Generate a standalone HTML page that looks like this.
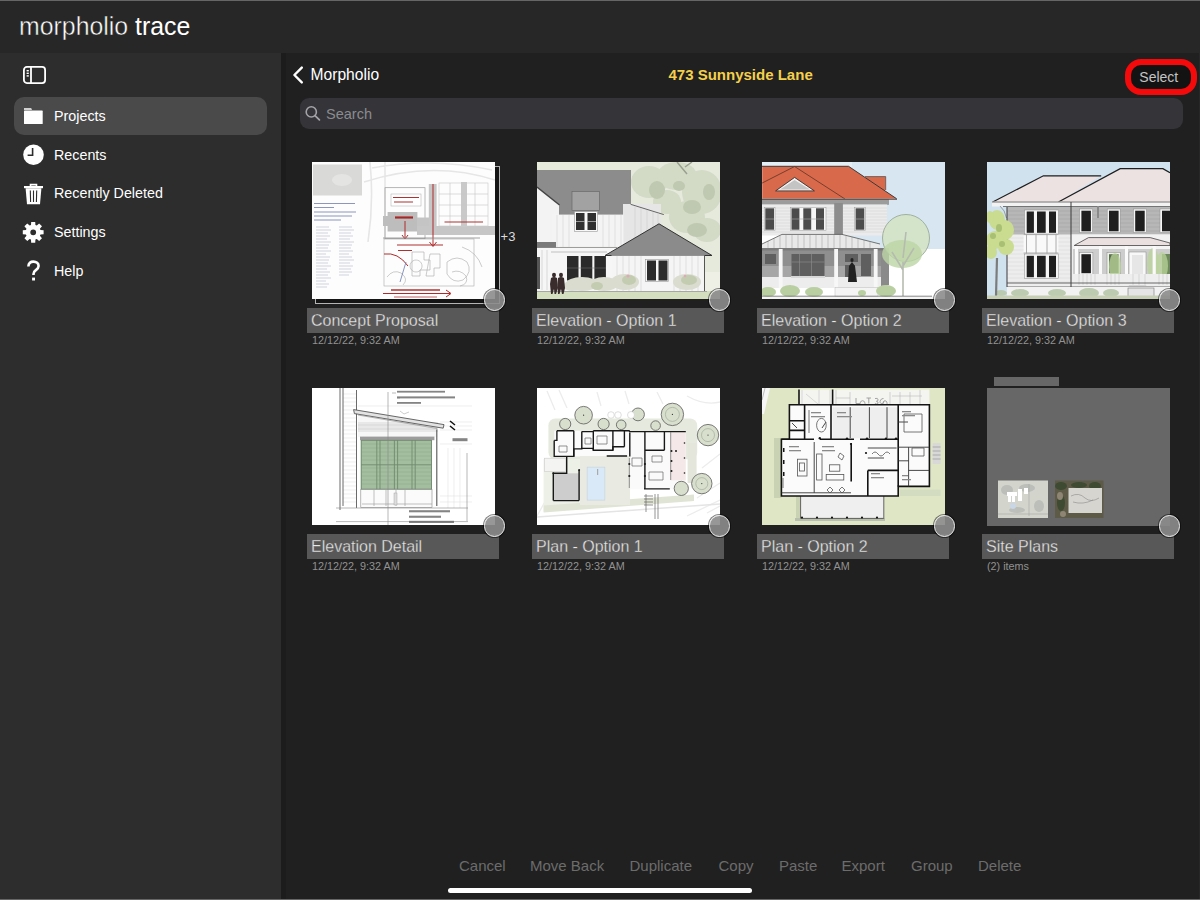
<!DOCTYPE html>
<html><head><meta charset="utf-8">
<style>
*{margin:0;padding:0;box-sizing:border-box}
html,body{width:1200px;height:900px;overflow:hidden;background:#202020;font-family:"Liberation Sans",sans-serif}
.a{position:absolute}
.t{position:absolute;white-space:nowrap;line-height:1}
#topline{left:0;top:0;width:1200px;height:1.2px;background:#666}
#header{left:0;top:1px;width:1200px;height:52px;background:#272727}
#sidebar{left:0;top:53px;width:281px;height:847px;background:#2d2d2d}
#sep{left:281px;top:53px;width:5px;height:847px;background:#1c1c1c}
#botline{left:0;top:899px;width:1200px;height:1px;background:#666}
#redge{left:1198.5px;top:53px;width:1.5px;height:846px;background:#272727}
.side{color:#fff;font-size:14.3px}
.lbl{position:absolute;height:25px;width:191.5px;background:#585858}
.lt{position:absolute;white-space:nowrap;line-height:1;font-size:16px;color:#e8e8e8;-webkit-text-stroke:0.3px #585858}
.dt{position:absolute;white-space:nowrap;line-height:1;font-size:10.8px;color:#929292}
.th{position:absolute;width:183px;height:137px;background:#fff;overflow:hidden}
.th svg{display:block}
.cir{position:absolute;width:21.6px;height:21.6px;border-radius:50%;border:1.7px solid #ececec;background:rgba(140,140,140,0.9);box-shadow:0 0 0 1px rgba(0,0,0,0.5)}
.tb{position:absolute;white-space:nowrap;line-height:1;font-size:15px;color:#6c6c6c;top:858px}
</style></head>
<body>
<div id="topline" class="a"></div>
<div id="header" class="a"></div>
<div class="t" style="left:19px;top:13.6px;font-size:25.5px;color:#fff;transform:scaleX(0.975);transform-origin:0 0"><span style="-webkit-text-stroke:0.45px #272727">morpholio</span> trace</div>
<div id="sidebar" class="a"></div>
<div id="sep" class="a"></div>

<!-- sidebar toggle icon -->
<svg class="a" style="left:22px;top:65px" width="26" height="21" viewBox="0 0 26 21">
 <rect x="1.9" y="1.9" width="21.2" height="16.2" rx="3" fill="none" stroke="#fff" stroke-width="1.8"/>
 <line x1="9" y1="2" x2="9" y2="18" stroke="#fff" stroke-width="1.8"/>
 <rect x="4.6" y="5" width="2.2" height="1.4" fill="#fff"/>
 <rect x="4.6" y="7.6" width="2.2" height="1.4" fill="#fff"/>
 <rect x="4.6" y="10.2" width="2.2" height="1.4" fill="#fff"/>
</svg>

<div class="a" style="left:14px;top:97px;width:253px;height:38px;border-radius:10px;background:#4a4a4a"></div>
<!-- folder -->
<svg class="a" style="left:23px;top:106px" width="22" height="20" viewBox="0 0 22 20">
 <path d="M1 2.2 h7.2 l0.8 1.6 H1z" fill="#fff"/>
 <rect x="1" y="4.6" width="18.7" height="13.4" rx="0.6" fill="#fff"/>
</svg>
<div class="t side" style="left:54px;top:109.2px">Projects</div>
<!-- clock -->
<svg class="a" style="left:22px;top:143px" width="24" height="24" viewBox="0 0 24 24">
 <circle cx="11.5" cy="11.7" r="10.3" fill="#fff"/>
 <path d="M10.6 5 V12.2 H5.6" fill="none" stroke="#2d2d2d" stroke-width="1.6"/>
</svg>
<div class="t side" style="left:54px;top:147.6px">Recents</div>
<!-- trash -->
<svg class="a" style="left:22px;top:182px" width="24" height="24" viewBox="0 0 24 24">
 <path d="M8.5 4.2 V2.6 h6 V4.2" fill="none" stroke="#fff" stroke-width="1.6"/>
 <rect x="2" y="4" width="19" height="2.2" fill="#fff"/>
 <path d="M3.6 6.2 L5 22.3 H18 L19.4 6.2z" fill="#fff"/>
 <line x1="8.3" y1="8.5" x2="8.6" y2="20" stroke="#2d2d2d" stroke-width="1.1"/>
 <line x1="11.5" y1="8.5" x2="11.5" y2="20" stroke="#2d2d2d" stroke-width="1.1"/>
 <line x1="14.7" y1="8.5" x2="14.4" y2="20" stroke="#2d2d2d" stroke-width="1.1"/>
</svg>
<div class="t side" style="left:54px;top:186.2px">Recently Deleted</div>
<!-- gear -->
<svg class="a" style="left:21px;top:220px" width="25" height="25" viewBox="0 0 25 25"><path d="M19.47 10.08 L22.61 10.28 L22.61 14.32 L19.47 14.52 L18.91 15.87 L20.99 18.23 L18.13 21.09 L15.77 19.01 L14.42 19.57 L14.22 22.71 L10.18 22.71 L9.98 19.57 L8.63 19.01 L6.27 21.09 L3.41 18.23 L5.49 15.87 L4.93 14.52 L1.79 14.32 L1.79 10.28 L4.93 10.08 L5.49 8.73 L3.41 6.37 L6.27 3.51 L8.63 5.59 L9.98 5.03 L10.18 1.89 L14.22 1.89 L14.42 5.03 L15.77 5.59 L18.13 3.51 L20.99 6.37 L18.91 8.73Z M9.30 12.30 a2.90 2.90 0 1 0 5.80 0 a2.90 2.90 0 1 0 -5.80 0Z" fill="#fff" fill-rule="evenodd"/></svg>
<div class="t side" style="left:54px;top:225.2px">Settings</div>
<!-- help -->
<svg class="a" style="left:24px;top:259px" width="20" height="24" viewBox="0 0 20 24">
 <path d="M4.4 7.4 C4.4 4 6.6 2.6 9.4 2.6 C12.4 2.6 14.6 4.4 14.6 7 C14.6 9.4 13 10.3 11.5 11.4 C10.2 12.3 9.5 13.2 9.5 15 V16" fill="none" stroke="#fff" stroke-width="2.6"/>
 <rect x="8.1" y="18.6" width="2.9" height="2.9" fill="#fff"/>
</svg>
<div class="t side" style="left:54px;top:263.9px">Help</div>

<!-- nav -->
<svg class="a" style="left:291px;top:65px" width="14" height="20" viewBox="0 0 14 20">
 <path d="M10.8 2.6 L3.4 10 L10.8 17.4" fill="none" stroke="#fff" stroke-width="2.4" stroke-linecap="round" stroke-linejoin="round"/>
</svg>
<div class="t" style="left:310.6px;top:66.7px;font-size:15.6px;color:#fff">Morpholio</div>
<div class="t" style="left:668.5px;top:67.3px;font-size:15px;font-weight:bold;color:#f4d04c">473 Sunnyside Lane</div>
<div class="a" style="left:1124.6px;top:58.6px;width:72.8px;height:36.4px;border:6.8px solid #f40a0a;border-radius:16px;background:#131313"></div>
<div class="t" style="left:1139.3px;top:70px;font-size:14px;color:#c4c4c4">Select</div>

<!-- search -->
<div class="a" style="left:299.5px;top:97.5px;width:883px;height:31px;border-radius:9px;background:#343439"></div>
<svg class="a" style="left:303px;top:103px" width="20" height="20" viewBox="0 0 20 20">
 <circle cx="8.3" cy="8.9" r="5.1" fill="none" stroke="#a3a3a8" stroke-width="1.6"/>
 <line x1="12" y1="12.6" x2="16.4" y2="16.9" stroke="#a3a3a8" stroke-width="1.8" stroke-linecap="round"/>
</svg>
<div class="t" style="left:326px;top:106.7px;font-size:14.5px;color:#8b8b8f">Search</div>

<!-- CARDS -->
<div id="cards">
<div class="a" style="left:315px;top:166px;width:184.5px;height:137.5px;border:1.3px solid #b4b4b4;background:#151515"></div>
<div class="t" style="left:500.6px;top:229.6px;font-size:13px;color:#dcdcdc">+3</div>
<div class="th" style="left:312px;top:162px"><svg width="183" height="137" viewBox="0 0 183 137">
<rect width="183" height="137" fill="#fdfdfd"/>
<rect x="1" y="2.5" width="49" height="31" fill="#d9dad8"/>
<ellipse cx="30" cy="18" rx="10" ry="6" fill="#e4e5e2"/>
<g stroke="#e6e6e6" stroke-width="1.6" fill="none">
<path d="M58 0 Q62 40 56 80 M73 0 V75 M52 20 Q120 -2 183 18 M60 6 Q120 -5 180 8"/>
</g>
<g stroke="#2e3f8a" stroke-width="0.9" opacity="0.6">
<path d="M2 41.5H43M2 45.5H22M2 50H44M2 54H40M2 58H29"/>
</g>
<g stroke="#c3c8d6" stroke-width="0.8">
<path d="M4 65H17M4 68H19M4 71H16M4 74H18M4 77H15M4 80H19M4 83H17M4 86H16M4 89H19M4 92H14M4 95H18M4 98H17M4 101H16M4 104H19M4 107H15M4 110H18M4 113H16M4 116H19M4 119H14M4 122H17M4 125H15"/>
<path d="M27 65H40M27 68H42M27 71H39M27 74H41M27 77H38M27 80H42M27 83H40M27 86H39M27 89H41M27 92H37M27 95H40M27 98H42M27 101H38M27 104H41M27 107H39M27 110H40M27 113H37"/>
</g>
<rect x="73" y="25.7" width="40" height="51" fill="none" stroke="#999" stroke-width="0.7"/>
<rect x="79" y="32" width="30" height="12" fill="#fff" stroke="#aaa" stroke-width="0.5"/>
<g stroke="#b03030" stroke-width="1.1"><path d="M81 35.5H107M82 40H101"/></g>
<path d="M75.6 50 H105.4 V69.5 H75.6z M71 54 H76 V64 H71z" fill="#bdbdbd"/>
<path d="M105 55.5 H121 V64 H105z" fill="#c4c4c4"/>
<rect x="105" y="64" width="78" height="9" fill="#c6c6c6"/>
<rect x="116.8" y="22" width="7.8" height="43" fill="#c6c6c6"/>
<rect x="149" y="20" width="6" height="45" fill="#c9c9c9"/>
<g stroke="#c8c8c8" stroke-width="0.6" fill="none">
<rect x="127" y="21" width="49" height="43"/>
<path d="M127 32H176M127 43H176M127 54H176M138 21V64M163 21V64"/>
</g>
<g stroke="#b03030" stroke-width="1.2"><path d="M132.5 60H171"/></g>
<path d="M121 22 V84" stroke="#b02a2a" stroke-width="1"/>
<path d="M117.5 80 L121 84.5 L124.5 80" stroke="#b02a2a" stroke-width="1" fill="none"/>
<g stroke="#a82828" stroke-width="2.2"><path d="M83 55.5H101"/></g>
<path d="M93 59 V76 M90 73 L93 77 L96 73" stroke="#b02a2a" stroke-width="1" fill="none"/>
<g stroke="#b03030" stroke-width="1.2"><path d="M85 83H131M86 88.5H100"/></g>
<rect x="72" y="77" width="90" height="47" fill="none" stroke="#aaa" stroke-width="0.6"/>
<path d="M71 76H168" stroke="#888" stroke-width="0.8"/>
<path d="M72 92 Q86 90 96 104" stroke="#b02a2a" stroke-width="1" fill="none"/>
<g stroke="#aaa" stroke-width="0.6" fill="none">
<path d="M100 90 h12 v8 h6 v10 h-10 v6 h-8z M118 92 h10 v14 h-6 v8 h-8z M104 98 a6 6 0 1 0 0.1 0 M135 100 q10 -8 20 0 q6 10 -4 18 q-10 4 -16 -6z M150 85 q15 5 20 20"/>
<path d="M75 115 q6 -8 14 -4 q8 6 2 12 M140 110 q8 -3 14 4 q3 8 -6 10"/>
</g>
<path d="M94 100 L88 120" stroke="#6a7ab0" stroke-width="0.8"/>
<g stroke="#b03030" stroke-width="1.3"><path d="M79 128H128"/></g>
<path d="M71 131.5H138 M134 128 L139 131.5 L134 135" stroke="#b02a2a" stroke-width="1" fill="none"/>
<g stroke="#c05050" stroke-width="0.9"><path d="M82 135H125"/></g>
</svg></div>
<div class="lbl" style="left:307px;top:308.3px"></div>
<div class="cir" style="left:483.7px;top:289.0px"></div>
<div class="lt" style="left:311px;top:312.8px">Concept Proposal</div>
<div class="dt" style="left:312px;top:335.4px">12/12/22, 9:32 AM</div>
<div class="th" style="left:537px;top:162px"><svg width="183" height="137" viewBox="0 0 183 137">
<rect width="183" height="137" fill="#eef0e6"/>
<rect x="90" y="0" width="93" height="110" fill="#e6eadd"/>
<g fill="#d3dac6">
<ellipse cx="112" cy="20" rx="18" ry="16"/><ellipse cx="140" cy="14" rx="20" ry="14"/><ellipse cx="165" cy="30" rx="20" ry="22"/>
<ellipse cx="150" cy="55" rx="18" ry="16"/><ellipse cx="170" cy="68" rx="14" ry="12"/><ellipse cx="130" cy="40" rx="14" ry="12"/>
</g>
<g fill="#bfc8b0">
<ellipse cx="120" cy="28" rx="8" ry="9"/><ellipse cx="155" cy="45" rx="9" ry="7"/><ellipse cx="160" cy="68" rx="10" ry="7"/>
<ellipse cx="172" cy="30" rx="6" ry="8"/><ellipse cx="142" cy="24" rx="6" ry="5"/>
</g>
<path d="M140 0 L150 12 M148 5 L155 0" stroke="#9aa08f" stroke-width="1.5"/>
<rect x="-1" y="0" width="94" height="8" fill="#e6eadb"/>
<rect x="15" y="8" width="79" height="45" fill="#8c8c8c"/>
<path d="M0 8 H15 V53 H0z" fill="#8c8c8c"/>
<path d="M0 25 L22 43 V90 H0z" fill="#f3f3f3"/>
<path d="M0 25 L22.5 43" stroke="#444" stroke-width="1.4"/>
<rect x="35" y="29.5" width="27.5" height="19" fill="#a2a2a2" stroke="#6a6a6a" stroke-width="0.7"/>
<path d="M86 42 L124 42 L124 85 L86 85z" fill="#e6e6e6"/>
<path d="M93.6 42.3 L126.8 52.6" stroke="#666" stroke-width="1"/>
<g stroke="#cfcfcf" stroke-width="0.6">
<path d="M98 44V85M104 46V85M110 48V85M116 50V85M121 51V85"/>
</g>
<rect x="14.4" y="52.6" width="72" height="32" fill="#f4f4f4"/>
<g stroke="#d4d4d4" stroke-width="0.6">
<path d="M20 53V85M26 53V85M32 53V85M66 53V85M72 53V85M78 53V85M84 53V85"/>
</g>
<rect x="37.5" y="49.5" width="23" height="20" fill="#f8f8f8" stroke="#999" stroke-width="0.6"/>
<rect x="39" y="51" width="8.5" height="17" fill="#2f2f2f"/><rect x="50.5" y="51" width="8.5" height="17" fill="#2f2f2f"/>
<path d="M39 59.5H47.5M50.5 59.5H59" stroke="#ddd" stroke-width="0.6"/>
<rect x="0" y="80" width="19" height="6.5" fill="#7a7a7a"/>
<rect x="0" y="86" width="86" height="44" fill="#f6f6f6"/>
<path d="M0 85.5H80" stroke="#888" stroke-width="0.8"/>
<path d="M14 90 H70" stroke="#aaa" stroke-width="0.7"/>
<rect x="30" y="94" width="11.5" height="24.5" fill="#2a2a2a"/><rect x="43.8" y="94" width="11.5" height="24.5" fill="#2a2a2a"/><rect x="57.4" y="94" width="11.5" height="24.5" fill="#2a2a2a"/>
<path d="M30 106H69" stroke="#777" stroke-width="0.5"/>
<rect x="0" y="95" width="3" height="32" fill="#555"/>
<path d="M5 88V128M10 88V128" stroke="#ccc" stroke-width="0.7"/>
<path d="M68 93.5 L122 61.8 L175 93.5z" fill="#8b8b8b" stroke="#333" stroke-width="1"/>
<rect x="74.5" y="93.5" width="93" height="36" fill="#f5f5f5"/>
<g stroke="#d2d2d2" stroke-width="0.6">
<path d="M80 94V129M86 94V129M92 94V129M98 94V129M104 94V129M137 94V129M143 94V129M149 94V129M155 94V129M161 94V129"/>
</g>
<path d="M167.5 93.5V130" stroke="#555" stroke-width="1"/>
<rect x="108.5" y="97.5" width="23" height="22" fill="#f8f8f8" stroke="#999" stroke-width="0.6"/>
<rect x="110" y="98.5" width="9" height="20" fill="#2c2c2c"/><rect x="121.5" y="98.5" width="9" height="20" fill="#2c2c2c"/>
<rect x="0" y="129" width="183" height="8" fill="#d4dfc0"/>
<path d="M0 129.5H170" stroke="#9a9a9a" stroke-width="0.8"/>
<g fill="#d9dccf">
<ellipse cx="45" cy="122" rx="16" ry="7"/><ellipse cx="67" cy="122" rx="14" ry="7"/><ellipse cx="88" cy="120" rx="14" ry="8"/>
<ellipse cx="150" cy="120" rx="14" ry="8"/><ellipse cx="35" cy="124" rx="9" ry="5"/>
</g>
<g fill="#c3ccb0"><ellipse cx="92" cy="118" rx="7" ry="5"/><ellipse cx="152" cy="118" rx="8" ry="5"/><ellipse cx="60" cy="124" rx="6" ry="4"/></g>
<g fill="#e0a8b8"><circle cx="91" cy="114" r="1.5"/><circle cx="148" cy="114" r="1.3"/></g>
<g fill="#3a2c2c">
<ellipse cx="17" cy="113" rx="2" ry="2.3"/><path d="M14 116 Q17 114 20 116 L21 126 L19 132 H17.5 L17 127 L15.5 132 H14 L13 122z"/>
<ellipse cx="24" cy="113" rx="2" ry="2.3"/><path d="M21 116 Q24 114 27 116 L28 126 L26.5 132 H25 L24 127 L22.5 132 H21 L20.5 122z"/>
</g>
</svg></div>
<div class="lbl" style="left:532px;top:308.3px"></div>
<div class="cir" style="left:708.7px;top:289.0px"></div>
<div class="lt" style="left:536px;top:312.8px">Elevation - Option 1</div>
<div class="dt" style="left:537px;top:335.4px">12/12/22, 9:32 AM</div>
<div class="th" style="left:762px;top:162px"><svg width="183" height="137" viewBox="0 0 183 137">
<rect width="183" height="137" fill="#ffffff"/>
<rect x="80" y="0" width="103" height="87" fill="#d7e6f1"/>
<rect x="0" y="0" width="90" height="5" fill="#e4eef5"/>
<path d="M0.2 4.3 L86.5 4.3 L134.7 36.8 L0.2 36.8z" fill="#d9694b"/>
<path d="M103 14.6 L123.7 14.6 L123.7 28 L112 28z" fill="#d9694b"/>
<path d="M103 14.6H123.7V28" fill="none" stroke="#555" stroke-width="0.8"/>
<path d="M0 4.3 H86.5 L134.7 36.8" fill="none" stroke="#3a3a3a" stroke-width="1"/>
<path d="M0.2 21 L32.6 4.5 L83 37" fill="none" stroke="#6a3a2a" stroke-width="0.9"/>
<path d="M13.6 28.9 L32.6 15.4 L52.4 28.9z" fill="#f2f2f2" stroke="#333" stroke-width="0.9"/>
<path d="M18 27.5 L32.6 18 L48 27.5z" fill="#c4c4c4"/>
<rect x="0" y="36.8" width="127" height="6" fill="#9c9c9c"/>
<path d="M0 37.3 H135" stroke="#444" stroke-width="0.9"/>
<rect x="0" y="42.5" width="125" height="31" fill="#ebebeb"/>
<g stroke="#cfcfcf" stroke-width="0.5">
<path d="M0 46H125M0 49H125M0 52H125M0 55H125M0 58H125M0 61H125M0 64H125M0 67H125M0 70H125"/>
</g>
<rect x="72.2" y="41" width="8.7" height="32" fill="#8c8c8c"/>
<g fill="#f6f6f6" stroke="#999" stroke-width="0.5">
<rect x="2.3" y="45.3" width="10.7" height="23.4"/><rect x="28.5" y="45.3" width="35.5" height="23.4"/><rect x="92.6" y="45.3" width="10.7" height="23.4"/>
</g>
<g fill="#4c4c4c">
<rect x="3.3" y="46.3" width="8.7" height="21.4"/><rect x="29.5" y="46.3" width="7.9" height="21.4"/><rect x="41.3" y="46.3" width="7.9" height="21.4"/><rect x="54" y="46.3" width="8" height="21.4"/><rect x="93.6" y="46.3" width="8.7" height="21.4"/>
</g>
<path d="M3.3 57H12M29.5 57H62M93.6 57H102.3" stroke="#aaa" stroke-width="0.6"/>
<path d="M0 82 L20 72.4 H80 L118 82 V87 H0z" fill="#e9e9e9"/>
<g stroke="#a8a8a8" stroke-width="0.6">
<path d="M6 79V87M12 76V87M18 74V87M24 73V87M30 73V87M36 73V87M42 73V87M48 73V87M54 73V87M60 73V87M66 73V87M72 73V87M78 73V87M84 74V87M90 75V87M96 77V87M102 78V87M108 80V87"/>
</g>
<path d="M0 82 L20 72.4 H80 L118 82" fill="none" stroke="#555" stroke-width="0.8"/>
<rect x="0" y="86" width="127" height="3" fill="#7b7b7b"/>
<rect x="0" y="88.5" width="127" height="37.5" fill="#8f8f8f"/>
<rect x="0" y="104" width="127" height="22" fill="#a6a6a6"/>
<g fill="#5f5f5f">
<rect x="3" y="92" width="11" height="10"/><rect x="29.5" y="92" width="33" height="25"/><rect x="83" y="92" width="13" height="8"/><rect x="99" y="92" width="10" height="22"/><rect x="83" y="103" width="10" height="18"/>
</g>
<path d="M29.5 100H62.5M37.5 92V117M49.5 92V117" stroke="#8a8a8a" stroke-width="0.7"/>
<rect x="0" y="115" width="127" height="11" fill="#ededed"/>
<rect x="29" y="114" width="34" height="2" fill="#d8d8d8"/>
<g fill="#f7f7f7"><rect x="16.8" y="87" width="3.8" height="39"/><rect x="72.2" y="87" width="3.8" height="39"/><rect x="111.8" y="87" width="3.8" height="39"/></g>
<path d="M119 89 L127 88 V123 L119 124z" fill="#8a8a8a"/>
<path d="M87 104 L90 100 L93 104 L95 120 L86 120z" fill="#222"/>
<ellipse cx="90" cy="98" rx="1.6" ry="2" fill="#222"/>
<rect x="73" y="125.5" width="43" height="9" fill="#f4f4f4" stroke="#bbb" stroke-width="0.5"/>
<circle cx="144" cy="76" r="23.5" fill="#d4e3c4" fill-opacity="0.85" stroke="#9aaa99" stroke-width="0.9"/>
<ellipse cx="140" cy="92" rx="20" ry="14" fill="#bcd4a4" fill-opacity="0.8"/>
<path d="M141 134 V100 M141 108 L130 90 M141 104 L152 86 M141 96 L144 70" stroke="#b5bcaf" stroke-width="1.6" fill="none"/>
<g fill="#b9cfa2">
<ellipse cx="6" cy="130" rx="8" ry="5"/><ellipse cx="28" cy="129" rx="10" ry="6"/><ellipse cx="52" cy="130" rx="9" ry="5"/><ellipse cx="124" cy="129" rx="10" ry="6"/><ellipse cx="100" cy="131" rx="4" ry="3"/>
</g>
<rect x="0" y="134.5" width="183" height="2.5" fill="#f4f4f4"/>
<path d="M0 134.2H170" stroke="#555" stroke-width="0.7"/>
</svg></div>
<div class="lbl" style="left:757px;top:308.3px"></div>
<div class="cir" style="left:933.7px;top:289.0px"></div>
<div class="lt" style="left:761px;top:312.8px">Elevation - Option 2</div>
<div class="dt" style="left:762px;top:335.4px">12/12/22, 9:32 AM</div>
<div class="th" style="left:987px;top:162px"><svg width="183" height="137" viewBox="0 0 183 137">
<rect width="183" height="137" fill="#d1e2ef"/>
<path d="M5.7 40 L56.4 13.8 L114.2 13.8 L71.4 40z" fill="#ece2e2"/>
<path d="M5.7 40 L56.4 13.8 L114.2 13.8" fill="none" stroke="#1e1e1e" stroke-width="1.2"/>
<path d="M71.4 40 L133.2 6.7 L175.9 6.7 L183 10.7 L183 40z" fill="#ece2e2"/>
<path d="M71.4 40 L133.2 6.7 L175.9 6.7 L183 10.7" fill="none" stroke="#1e1e1e" stroke-width="1.3"/>
<rect x="5" y="39.5" width="178" height="5" fill="#f2f2f2"/>
<path d="M5 40H183M16 44.5H183" stroke="#555" stroke-width="0.8"/>
<path d="M13 44 Q18 48 19.5 56" stroke="#888" stroke-width="0.8" fill="none"/>
<rect x="20" y="45" width="163" height="28" fill="#b7b7b7"/>
<g stroke="#a3a3a3" stroke-width="0.5"><path d="M20 49H183M20 53H183M20 57H183M20 61H183M20 65H183M20 69H183"/></g>
<rect x="20" y="72.5" width="163" height="53" fill="#ededed"/>
<g stroke="#d6d6d6" stroke-width="0.5"><path d="M20 76H84M20 80H84M20 84H84M20 88H84M20 92H84M20 96H84M20 100H84M20 104H84M20 108H84M20 112H84M20 116H84M20 120H84"/></g>
<rect x="84" y="72.5" width="99" height="11" fill="#f2f2f2"/>
<g fill="#f5f5f5" stroke="#8a8a8a" stroke-width="0.5">
<rect x="37.5" y="48" width="34" height="24"/><rect x="92.6" y="47" width="13" height="23.5"/><rect x="120.2" y="47" width="13" height="23.5"/><rect x="146.4" y="47" width="13" height="23.5"/><rect x="173" y="47" width="11" height="23.5"/>
</g>
<g fill="#1f1f1f">
<rect x="39.7" y="49.5" width="7.2" height="21.3"/><rect x="50" y="49.5" width="8.7" height="21.3"/><rect x="62" y="49.5" width="7" height="21.3"/>
<rect x="94.4" y="48.7" width="9.5" height="20.6"/><rect x="122" y="48.7" width="9.6" height="20.6"/><rect x="148.2" y="48.7" width="9.5" height="20.6"/><rect x="175" y="48.7" width="8" height="20.6"/>
</g>
<path d="M111 44 V56" stroke="#8a8a8a" stroke-width="2"/>
<rect x="36.6" y="72.4" width="34.8" height="19" fill="#f9f9f9"/>
<path d="M39.5 72.4V91.4M49 72.4V91.4M60 72.4V91.4M69 72.4V91.4M36.6 91H71.4M36.6 72.6H71.4" stroke="#999" stroke-width="0.8"/>
<rect x="37.5" y="92" width="34" height="24.5" fill="#f5f5f5" stroke="#8a8a8a" stroke-width="0.5"/>
<g fill="#1f1f1f"><rect x="39.7" y="93.8" width="7.2" height="21.4"/><rect x="50" y="93.8" width="8.7" height="21.4"/><rect x="62" y="93.8" width="7" height="21.4"/></g>
<path d="M20 45V125M84 40V137" stroke="#3a3a3a" stroke-width="1"/>
<path d="M87.2 83.5 L101.5 75.6 L163.2 75.6 L183 81 L183 83.5z" fill="#ebe0e0" stroke="#444" stroke-width="0.8"/>
<rect x="86" y="84" width="97" height="3" fill="#f4f4f4"/>
<rect x="86" y="87" width="97" height="36" fill="#cdcdcd"/>
<rect x="92.4" y="90.5" width="13.5" height="22.5" fill="#f5f5f5" stroke="#888" stroke-width="0.5"/>
<rect x="94.4" y="92.2" width="9.5" height="19" fill="#1e1e1e"/>
<rect x="120" y="90.5" width="13.5" height="22.5" fill="#eef2ea" stroke="#888" stroke-width="0.5"/>
<rect x="122" y="92.2" width="9.6" height="19" fill="#58704c"/>
<rect x="175" y="92" width="8" height="20" fill="#6e8a5c"/>
<rect x="142" y="90" width="17" height="33" fill="#f8f8f8" stroke="#888" stroke-width="0.5"/>
<rect x="145" y="93" width="11" height="27" fill="#e6e6e6"/>
<g fill="#b9d39a" fill-opacity="0.75"><ellipse cx="128" cy="105" rx="6" ry="14"/><ellipse cx="166" cy="102" rx="6" ry="16"/><ellipse cx="175" cy="104" rx="6" ry="14"/></g>
<g fill="#fafafa"><rect x="112" y="84" width="3" height="39"/><rect x="138" y="84" width="3" height="39"/><rect x="165.6" y="84" width="3.2" height="39"/><rect x="88" y="84" width="3" height="39"/></g>
<rect x="86" y="112" width="97" height="11" fill="#eeeeee"/>
<g stroke="#bdbdbd" stroke-width="0.5"><path d="M92 112V123M96 112V123M100 112V123M104 112V123M108 112V123M120 112V123M124 112V123M128 112V123M132 112V123M146 112V123M152 112V123M158 112V123M172 112V123M176 112V123M180 112V123"/></g>
<path d="M20 121H183M20 125H183" stroke="#444" stroke-width="0.8"/>
<rect x="20" y="125" width="163" height="9" fill="#f2f2f2"/>
<rect x="141" y="126" width="26" height="9" fill="#e5e5e5" stroke="#777" stroke-width="0.6"/>
<g fill="#b7c8a8" fill-opacity="0.9"><ellipse cx="33" cy="131" rx="9" ry="4"/><ellipse cx="70" cy="131" rx="9" ry="4"/><ellipse cx="102" cy="131" rx="10" ry="5"/><ellipse cx="124" cy="131" rx="8" ry="4"/><ellipse cx="14" cy="131" rx="6" ry="3"/></g>
<g fill="#c9dc8f">
<ellipse cx="10" cy="58" rx="8" ry="10"/><ellipse cx="18" cy="68" rx="9" ry="10"/><ellipse cx="8" cy="78" rx="9" ry="9"/><ellipse cx="19" cy="85" rx="8" ry="8"/><ellipse cx="4" cy="90" rx="6" ry="7"/><ellipse cx="3" cy="55" rx="4" ry="6"/>
</g>
<g fill="#a9bf73"><ellipse cx="12" cy="66" rx="3" ry="4"/><ellipse cx="15" cy="82" rx="3" ry="3"/><ellipse cx="6" cy="74" rx="3" ry="3"/></g>
<path d="M10 96 L9 134" stroke="#7c7c7c" stroke-width="2.2"/>
<rect x="0" y="133.5" width="183" height="3.5" fill="#c6ceb4"/>
</svg></div>
<div class="lbl" style="left:982px;top:308.3px"></div>
<div class="cir" style="left:1158.7px;top:289.0px"></div>
<div class="lt" style="left:986px;top:312.8px">Elevation - Option 3</div>
<div class="dt" style="left:987px;top:335.4px">12/12/22, 9:32 AM</div>
<div class="th" style="left:312px;top:388px"><svg width="183" height="137" viewBox="0 0 183 137">
<rect width="183" height="137" fill="#ffffff"/>
<g stroke="#e2e2e2" stroke-width="0.6">
<path d="M31 6H44M31 10H44M31 14H44M31 18H44M31 22H44M31 26H44M31 30H44M31 34H44M31 38H44M31 42H44M31 46H44M31 50H44M31 54H44M31 58H44M31 62H44M31 66H44M31 70H44M31 74H44M31 78H44M31 82H44M31 86H44M31 90H44M31 94H44M31 98H44M31 102H44M31 106H44M31 110H44M31 114H44"/>
<path d="M46 18H160M128 34H160M128 38H160M128 42H160M128 56H160M128 108H160M128 114H160"/>
<path d="M136 60V120M142 60V120M148 60V120"/>
</g>
<path d="M28 0V122M31 0V118M44.5 2V120" stroke="#5a5a5a" stroke-width="0.9"/>
<path d="M46 26.4 L125.6 40.8 L125.6 49 L46 49z" fill="#f7f7f7"/>
<rect x="46" y="34" width="80" height="10" fill="#e8e8e8"/>
<path d="M46 37H126M46 41H126" stroke="#cfcfcf" stroke-width="0.6"/>
<path d="M41.6 21.6 L132 36.6 L131.2 40.2 L42.4 25.6z" fill="#e3e3e3" stroke="#444" stroke-width="0.8"/>
<path d="M46 27 L125 40.5" stroke="#888" stroke-width="0.6"/>
<rect x="48" y="48.6" width="74.4" height="3.6" fill="#9c9c9c"/>
<rect x="48.8" y="52" width="71.2" height="49.6" fill="#a3bd9f"/>
<g stroke="#8ea88a" stroke-width="0.5">
<path d="M50 56H120M50 60H120M50 64H120M50 68H120M50 72H120M50 80H120M50 84H120M50 88H120M50 92H120M50 96H120"/>
</g>
<g stroke="#718a6e" stroke-width="0.9">
<path d="M49.3 52V101.6M64.8 52V101.6M68 52V101.6M82.4 52V101.6M85.6 52V101.6M100 52V101.6M103.2 52V101.6M119.5 52V101.6M49 76.8H120M49 52.4H120M49 101.2H120"/>
</g>
<path d="M124.8 41.6V118" stroke="#555" stroke-width="1.1"/>
<rect x="48.8" y="101.6" width="71.2" height="18" fill="#fbfbfb" stroke="#888" stroke-width="0.6"/>
<g stroke="#999" stroke-width="0.6"><path d="M62 102V118M74 102V118M84 102V118M93 102V118M50 116H120"/></g>
<rect x="82" y="105" width="3" height="12" fill="#ddd" stroke="#999" stroke-width="0.4"/>
<path d="M24 120H156M24 133.6H156M76 4V137M155 65V133" stroke="#888" stroke-width="0.6"/>
<g fill="#666" opacity="0.8">
<rect x="85" y="2.8" width="48" height="1.8"/><rect x="85" y="8.4" width="58" height="2"/><rect x="85" y="14" width="24" height="1.8"/>
<rect x="140.5" y="50.2" width="15" height="3"/>
<rect x="97" y="122.2" width="41" height="2.1"/><rect x="97" y="127.7" width="32" height="2.1"/><rect x="97" y="132.8" width="45" height="2.2"/>
</g>
<path d="M80 5 H84 M88 10 h-3" stroke="#777" stroke-width="0.5"/>
<path d="M138 33 L143 37 M138 38 L143 42" stroke="#111" stroke-width="1.6"/>
<path d="M88 23 l4 3 l5 -2" stroke="#aaa" stroke-width="0.6" fill="none"/>
</svg></div>
<div class="lbl" style="left:307px;top:534.4px"></div>
<div class="cir" style="left:483.7px;top:515.0px"></div>
<div class="lt" style="left:311px;top:538.5px">Elevation Detail</div>
<div class="dt" style="left:312px;top:561.1px">12/12/22, 9:32 AM</div>
<div class="th" style="left:537px;top:388px"><svg width="183" height="137" viewBox="0 0 183 137">
<rect width="183" height="137" fill="#ffffff"/>
<g stroke="#ececec" stroke-width="1.3" fill="none">
<path d="M10 3 L18 22 M22 2 L30 20 M60 4 L64 18 M88 3 L92 16 M120 4 L126 16 M150 8 Q168 18 183 14 M160 110 L183 95 M150 128 L183 112 M165 80 L183 66 M170 125 L183 118 M0 128 L10 110"/>
</g>
<rect x="11.4" y="30.4" width="148.8" height="40.8" rx="7" fill="#e6e9de"/>
<rect x="150.6" y="55" width="9" height="40" fill="#e4e6dc"/>
<path d="M6.6 71 H93 V117 L6.6 124z" fill="#edf0e7"/>
<path d="M6.6 117.6 L157 106.4 L157 113 L6.6 124.5z" fill="#e0e4d5"/>
<path d="M0 129 L183 116" stroke="#e4e4e4" stroke-width="1.5"/>
<rect x="7.4" y="70.2" width="21.4" height="13.4" fill="#f4f4f2" stroke="#ccc" stroke-width="0.6"/>
<path d="M17.2 42.7 H92.8 V68.4 H17.2z" fill="#fbfbfb"/>
<rect x="92.3" y="43.6" width="56.5" height="57.7" fill="#fafafa"/>
<rect x="133.7" y="43.6" width="15" height="48.8" fill="#f4e8e8"/>
<rect x="43" y="68" width="50" height="49" fill="#e9ebe2"/>
<rect x="50.1" y="79.1" width="17.8" height="33" fill="#d9e9f8" stroke="#c5d0dc" stroke-width="0.6"/>
<rect x="16.3" y="85.3" width="25.8" height="27" fill="#cdcdcd"/>
<g fill="none" stroke="#181818" stroke-width="1.4">
<path d="M19.9 42.7 H36.8 M17.2 52.4 V68.4 H36.8 V60.9 H44.8 V60.4 H56.3 V62.2 H75.9 V58.7 H87.4 M19.9 42.7 V52.4 H17.2"/>
<path d="M36.8 42.7 V68.4 M44.8 43.6 V60.9 M44.8 43.6 H56.3 M56.3 42.7 V62.2 M56.3 42.7 H75.9 M75.9 42.7 V62.2 M75.9 42.7 H87.4 V58.7 M87.4 42.7 H92.8 M69.7 68 H90.1 M92.8 44.4 V68.4"/>
<path d="M29.7 68.4 V85.3 H16.3 V112.6 M42.1 82 V112.6 M16.3 112.6 H42.1"/>
<path d="M91.9 43.6 H148.8 M107.9 43.6 V101 M107 100.9 H132.8 M107.9 62.2 H127.4 M127.4 43.6 V62.2"/>
</g>
<g fill="none" stroke="#666" stroke-width="0.7">
<path d="M22 58 h8 v6 h-8z M48 50 h6 v6 h-6z M60 48 h10 v8 h-10z M115 68 h10 v6 h-10z M112 84 h14 v8 h-14z M95 70 h10 v8 h-10z"/>
<path d="M92.3 70 V100 M133.7 44 V92"/>
</g>
<g fill="#1a1a1a">
<circle cx="92.3" cy="76" r="1.1"/><circle cx="92.3" cy="88" r="1.1"/><circle cx="107.9" cy="76" r="1.1"/><circle cx="107.9" cy="88" r="1.1"/>
<circle cx="134.5" cy="63" r="1"/><circle cx="134.5" cy="73" r="1"/><circle cx="134.5" cy="83" r="1"/><circle cx="147.5" cy="55" r="0.8"/><circle cx="147.5" cy="70" r="0.8"/><circle cx="147.5" cy="85" r="0.8"/><circle cx="139" cy="63" r="1"/>
<circle cx="42.1" cy="82" r="1"/><circle cx="16.3" cy="85.3" r="1"/>
</g>
<g fill="#d9dfcd" stroke="#5a5a5a" stroke-width="0.8">
<circle cx="46.6" cy="27.2" r="8.8"/><circle cx="28.2" cy="36" r="5.6"/><circle cx="66.6" cy="36" r="5.6"/><circle cx="84.2" cy="36.8" r="4.8"/><circle cx="101" cy="26.4" r="6.4"/><circle cx="118.6" cy="37.6" r="4.8"/><circle cx="135.4" cy="26.4" r="11.2"/><circle cx="171" cy="47.1" r="10.7"/><circle cx="164.8" cy="95.6" r="10.2"/><circle cx="144.3" cy="100.4" r="7.1"/>
</g>
<g fill="none" stroke="#9aa394" stroke-width="0.6"><circle cx="135.4" cy="26.4" r="7"/><circle cx="171" cy="47.1" r="6.5"/><circle cx="164.8" cy="95.6" r="6"/></g>
<g fill="#ffffff" stroke="#c8c8c8" stroke-width="0.6"><circle cx="74" cy="27" r="3.3"/><circle cx="81" cy="27" r="3.3"/><circle cx="94" cy="27" r="3.5"/></g>
<g fill="#333"><circle cx="46.6" cy="27.2" r="0.6"/><circle cx="135.4" cy="26.4" r="0.6"/><circle cx="171" cy="47.1" r="0.6"/><circle cx="164.8" cy="95.6" r="0.6"/></g>
<g stroke="#666" stroke-width="0.7"><path d="M107 108 H116 M107 111 H116 M107 114 H116 M107 117 H116 M109 106 V124 M118 106 V131 M121 106 V131"/></g>
<g fill="#aaa"><rect x="60" y="81" width="1.2" height="6"/></g>
</svg></div>
<div class="lbl" style="left:532px;top:534.4px"></div>
<div class="cir" style="left:708.7px;top:515.0px"></div>
<div class="lt" style="left:536px;top:538.5px">Plan - Option 1</div>
<div class="dt" style="left:537px;top:561.1px">12/12/22, 9:32 AM</div>
<div class="th" style="left:762px;top:388px"><svg width="183" height="137" viewBox="0 0 183 137">
<rect width="183" height="137" fill="#dfe6c6"/>
<path d="M0 0 H8 L2 26 H0z" fill="#f6f6f6"/>
<path d="M3 0 L0 12" stroke="#bbb" stroke-width="1"/>
<path d="M12 50 H19.4 V110 H12z" fill="#c9d2b2"/>
<path d="M34 108 H38.6 V132 H34z" fill="#c9d2b2"/>
<rect x="37" y="1.6" width="130.4" height="16" fill="#f4f4f1"/>
<g stroke="#b9b9b9" stroke-width="0.6"><path d="M74 2V17M88 4V17M128 4V16M138 4V16M148 4V16M158 2V17M130 8H160M74 10H88"/></g>
<g stroke="#9a9a9a" stroke-width="0.9" fill="none"><path d="M94 10 V15.5 H98 M100.5 12.7 a2.4 2.9 0 1 0 0.1 0 M104.5 10 H109 M106.8 10 V15.5 M113 10.5 q3 -1 3.2 1.5 q-0.5 1.2 -1.8 1.3 q2.5 0.5 1.5 2.2 q-1.5 1 -3 0 M118 13 q1.5 -3 3.5 -2.5 M118.2 13 a1.8 1.8 0 1 0 3.4 0.5 M123 12.7 a2 2.9 0 1 0 0.1 0"/></g>
<path d="M27.4 16.8 H167.4 V98.4 H136.2 V108 H19.4 V51.2 H27.4z" fill="#fbfbfb"/>
<rect x="70.6" y="19.2" width="65.6" height="31" fill="#eeeeee"/>
<rect x="38.6" y="108" width="83.2" height="22.4" fill="#efefef"/>
<rect x="33" y="130" width="90" height="3" fill="#b9bfae"/>
<path d="M38.6 108 V130.4 H121.8 V108" fill="none" stroke="#555" stroke-width="0.9"/>
<rect x="137.8" y="101.6" width="40.8" height="6.4" fill="#d3dcc0"/>
<rect x="170.6" y="55.2" width="8" height="20.8" fill="#d8d8d8"/>
<path d="M170.6 59H178.6M170.6 63H178.6M170.6 67H178.6M170.6 71H178.6" stroke="#999" stroke-width="0.7"/>
<g stroke="#c4c4c4" stroke-width="0.6" fill="none"><path d="M40 2 V17 M44 6 L56 16 M57 2 V17 M68 2 V17"/></g>
<g fill="none" stroke="#141414" stroke-width="1.6">
<path d="M27.4 16.8 H167.4 V98.4 H136.2 V108 H19.4 V51.2 H27.4z"/>
<path d="M69 16.8 V51 M136.2 16.8 V98.4 M19.4 51.2 H52 M58 51.2 H92 M98 51.2 H136 M37 1.6 V16.8 M70.6 1.6 V17 M89.2 55 V93.6 M105.8 82.4 H136.2 M105.8 82.4 V108 M27.4 32.8 H42.6 M27.4 42.4 H42.6 M42.6 16.8 V51"/>
</g>
<g fill="none" stroke="#333" stroke-width="0.9">
<path d="M136.2 59.2 H167.4 M146.6 59.2 V98.4 M136.2 72.8 H146.6 M146.6 82.4 H167.4 M136.2 34 H146 M105.8 60 H134.6 M105.8 70 H122 M88.2 19.2 V50 M107.4 19.2 V50 M125 19.2 V50 M52.2 54 V104.8 M19.4 104.8 H89 M30 35 l5 5 M60 40 l4 -6"/>
</g>
<g fill="none" stroke="#555" stroke-width="0.8">
<ellipse cx="59.4" cy="37.2" rx="4.8" ry="6.8"/>
<rect x="35.4" y="71.2" width="9.6" height="16.8"/><rect x="37.5" y="75" width="5" height="8"/>
<rect x="54.6" y="66" width="5.4" height="26"/><rect x="64.2" y="86.4" width="17.6" height="5.6"/><rect x="67.4" y="76.8" width="10.4" height="6.4"/>
<path d="M78 65 l4 3 l-2 4 l-4 -3z M65 102 l3 -3 l3 3 l-3 3z M77 102 l3 -3 l3 3 l-3 3z"/>
<path d="M110 66 q3 -4 6 0 q3 4 6 0 q3 -4 6 0"/>
<path d="M142 26 h18 v18 h-18z M150 60 h12 v8 h-12z"/>
<path d="M47 22 V45 M21 90 V100"/>
</g>
<g fill="#141414">
<circle cx="57.8" cy="50.2" r="1.2"/><circle cx="85" cy="50.6" r="1.2"/><circle cx="105" cy="50.6" r="1.2"/><circle cx="124" cy="50.6" r="1.2"/><circle cx="134" cy="50.6" r="1.2"/><circle cx="104" cy="65" r="1.1"/><circle cx="89" cy="56" r="1.1"/>
<circle cx="40" cy="129.5" r="1.1"/><circle cx="55" cy="129.5" r="1.1"/><circle cx="70" cy="129.5" r="1.1"/><circle cx="85" cy="129.5" r="1.1"/><circle cx="100" cy="129.5" r="1.1"/><circle cx="115" cy="129.5" r="1.1"/>
<rect x="21" y="60" width="1.5" height="4"/><rect x="21" y="72" width="1.5" height="4"/><rect x="21" y="84" width="1.5" height="4"/>
</g>
<g fill="#8a8a8a">
<rect x="49" y="24" width="10" height="1.3"/><rect x="49" y="28" width="14" height="1.3"/>
<rect x="75" y="24" width="9" height="1.3"/><rect x="75" y="28" width="15" height="1.3"/>
<rect x="140" y="23" width="9" height="1.3"/><rect x="140" y="27" width="13" height="1.3"/>
<rect x="27" y="58" width="10" height="1.3"/><rect x="27" y="62" width="12" height="1.3"/>
<rect x="60" y="58" width="12" height="1.3"/><rect x="60" y="62" width="13" height="1.3"/>
<rect x="109" y="85" width="9" height="1.3"/><rect x="109" y="89" width="13" height="1.3"/>
<rect x="140" y="87" width="6" height="1.3"/><rect x="140" y="91" width="9" height="1.3"/>
</g>
</svg></div>
<div class="lbl" style="left:757px;top:534.4px"></div>
<div class="cir" style="left:933.7px;top:515.0px"></div>
<div class="lt" style="left:761px;top:538.5px">Plan - Option 2</div>
<div class="dt" style="left:762px;top:561.1px">12/12/22, 9:32 AM</div>
<div class="a" style="left:993.5px;top:376.6px;width:65px;height:9.2px;background:#676767"></div>
<div class="a" style="left:987px;top:388px;width:183px;height:137.5px;background:#676767"><svg width="183" height="137" viewBox="0 0 183 137" style="position:absolute;left:0;top:0">
<rect x="11" y="92.5" width="50" height="37.5" fill="#d3d5cc"/>
<g fill="#b9bcb8" opacity="0.9"><ellipse cx="20" cy="102" rx="6" ry="5"/><ellipse cx="40" cy="100" rx="8" ry="4"/><ellipse cx="52" cy="118" rx="5" ry="6"/><ellipse cx="30" cy="122" rx="8" ry="3"/></g>
<g fill="#ffffff"><rect x="20" y="104" width="10" height="4"/><rect x="21" y="108" width="3" height="6"/><rect x="25" y="108" width="3" height="6"/><rect x="31" y="101" width="4" height="12"/><rect x="37" y="100" width="4" height="6"/></g>
<g fill="#c9d6e6"><circle cx="26" cy="118" r="3"/></g>
<path d="M42 96 V128 M11 126 H61" stroke="#a9aca6" stroke-width="0.7"/>
<rect x="68" y="92.5" width="48.5" height="37.5" fill="#5d5a48"/>
<g fill="#3f4a33"><ellipse cx="74" cy="98" rx="6" ry="4"/><ellipse cx="92" cy="97" rx="8" ry="3"/><ellipse cx="108" cy="98" rx="6" ry="4"/><ellipse cx="74" cy="115" rx="4" ry="8"/></g>
<g fill="#8e8574"><ellipse cx="73" cy="108" rx="3" ry="4"/><ellipse cx="76" cy="126" rx="3" ry="3"/></g>
<rect x="81.5" y="100" width="33.5" height="25" fill="#d7d5d0"/>
<g stroke="#8a8a88" stroke-width="0.6" fill="none"><path d="M84 108 q8 -4 14 2 q6 5 14 0 M86 114 q10 3 20 -2"/></g>
</svg></div>
<div class="lbl" style="left:982px;top:534.4px"></div>
<div class="cir" style="left:1158.7px;top:515.0px"></div>
<div class="lt" style="left:986px;top:538.5px">Site Plans</div>
<div class="dt" style="left:987px;top:561.1px">(2) items</div>
</div>

<!-- toolbar -->
<div class="tb" style="left:459px">Cancel</div>
<div class="tb" style="left:530px">Move Back</div>
<div class="tb" style="left:629.5px">Duplicate</div>
<div class="tb" style="left:718.5px">Copy</div>
<div class="tb" style="left:779px">Paste</div>
<div class="tb" style="left:841.5px">Export</div>
<div class="tb" style="left:911px">Group</div>
<div class="tb" style="left:978px">Delete</div>
<div class="a" style="left:448px;top:887.9px;width:304px;height:5.5px;border-radius:2.75px;background:#fff"></div>
<div id="redge" class="a"></div>
<div id="botline" class="a"></div>
</body></html>
